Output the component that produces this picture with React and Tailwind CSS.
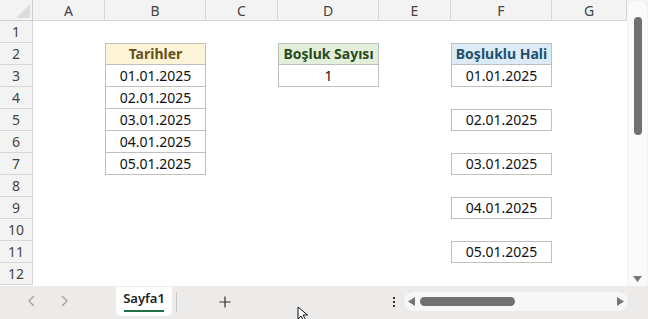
const cols = ["A", "B", "C", "D", "E", "F", "G"];
const rows = [1, 2, 3, 4, 5, 6, 7, 8, 9, 10, 11, 12];

// cell content keyed by "col+row"
const cells = {
  B2: { text: "Tarihler", head: "bg-[#fdf4d8] text-[#65501a]", top: true },
  B3: { text: "01.01.2025" },
  B4: { text: "02.01.2025" },
  B5: { text: "03.01.2025" },
  B6: { text: "04.01.2025" },
  B7: { text: "05.01.2025" },
  D2: { text: "Boşluk Sayısı", head: "bg-[#e3efdb] text-[#2b4a1d]", top: true },
  D3: { text: "1" },
  F2: { text: "Boşluklu Hali", head: "bg-[#ddebf7] text-[#22506c]", top: true },
  F3: { text: "01.01.2025" },
  F5: { text: "02.01.2025", top: true },
  F7: { text: "03.01.2025", top: true },
  F9: { text: "04.01.2025", top: true },
  F11: { text: "05.01.2025", top: true },
};

const Cell = ({ c }) => {
  if (!c) return <div className="bg-white" />;
  return (
    <div
      className={`flex items-center justify-center border-x border-b border-[#bfbfbf] text-[14px] leading-none ${
        c.top ? "border-t" : ""
      } ${c.head ? c.head + " font-bold" : "bg-white text-[#111]"}`}
    >
      {c.text}
    </div>
  );
};

const Sheet = () => (
  <div className="grid flex-1 grid-cols-[33px_72px_101px_72px_101px_72px_101px_1fr] grid-rows-[21px_repeat(12,22px)] bg-white">
    <div className="relative border-r border-b border-[#cdcdcd] bg-[#f3f3f3]">
      <svg className="absolute right-[2px] bottom-[2px]" width="14" height="14">
        <polygon points="14,0 14,14 0,14" fill="#dcdcdc" />
      </svg>
    </div>
    {cols.map((l) => (
      <div
        key={l}
        className="flex items-center justify-center border-r border-b border-[#d6d6d6] bg-[#f3f3f3] text-[14px] text-[#444]"
      >
        {l}
      </div>
    ))}
    {rows.map((r) => (
      <div key={r} className="contents">
        <div className="flex items-center justify-center border-r border-b border-[#d6d6d6] bg-[#f3f3f3] text-[14px] text-[#444]">
          {r}
        </div>
        {cols.map((l) => (
          <Cell key={l} c={cells[l + r]} />
        ))}
      </div>
    ))}
  </div>
);

const VScroll = () => (
  <div className="flex w-[21px] flex-col items-center bg-[#f3f3f3] pt-[1px]">
    <div className="flex h-full w-[19px] flex-col items-center rounded-t-[8px] bg-[#fafafa] pt-[16px] pb-[3px]">
      <div className="h-[118px] w-[8px] rounded-full bg-[#707070]" />
      <div className="flex-1" />
      <svg width="9" height="7" viewBox="0 0 9 7">
        <polygon points="0,0 9,0 4.5,6" fill="#777" />
      </svg>
    </div>
  </div>
);

const BottomBar = () => (
  <div className="relative flex h-[33px] items-start bg-[#edebe9] text-[#222]">
    <div className="flex h-full w-[116px] items-center gap-[22px] pl-[27px] pb-[3px]">
      <svg width="10" height="12" viewBox="0 0 10 12">
        <polyline points="7,1 2,6 7,11" fill="none" stroke="#a0a0a0" strokeWidth="1.3" />
      </svg>
      <svg width="10" height="12" viewBox="0 0 10 12">
        <polyline points="3,1 8,6 3,11" fill="none" stroke="#a0a0a0" strokeWidth="1.3" />
      </svg>
    </div>
    <div className="mt-[1px] flex h-[29px] w-[56px] flex-col items-center justify-center rounded-b-[5px] bg-white">
      <span className="text-[13px] leading-none font-semibold">Sayfa1</span>
      <div className="mt-[5px] h-[2px] w-[40px] bg-[#1e7145]" />
    </div>
    <div className="mt-[6px] ml-[4px] h-[20px] w-px bg-[#c8c8c8]" />
    <div className="flex h-full w-[95px] items-center justify-center pb-[2px]">
      <svg width="12" height="12" viewBox="0 0 12 12">
        <path d="M6 0.5v11M0.5 6h11" stroke="#333" strokeWidth="1.2" />
      </svg>
    </div>
    <div className="flex-1" />
    <div className="flex h-full w-[20px] flex-col items-center justify-center gap-[2px] pb-[2px]">
      <div className="h-[2px] w-[2px] bg-[#333]" />
      <div className="h-[2px] w-[2px] bg-[#333]" />
      <div className="h-[2px] w-[2px] bg-[#333]" />
    </div>
    <div className="mt-[6px] mr-[20px] flex h-[19px] w-[224px] items-center rounded-full bg-[#f7f7f7] px-[4px]">
      <svg width="7" height="9" viewBox="0 0 7 9">
        <polygon points="7,0 7,9 0,4.5" fill="#777" />
      </svg>
      <div className="ml-[5px] h-[9px] w-[95px] rounded-full bg-[#707070]" />
      <div className="flex-1" />
      <svg width="7" height="9" viewBox="0 0 7 9">
        <polygon points="0,0 0,9 7,4.5" fill="#777" />
      </svg>
    </div>
    <svg className="absolute top-[20px] left-[297px]" width="14" height="14" viewBox="0 0 14 14">
      <path d="M1 1v12l3-3 2.5 4.5 2-1L6 9h4.5z" fill="#fff" stroke="#111" strokeWidth="1" />
    </svg>
  </div>
);

export default function App() {
  return (
    <div
      className="flex h-[319px] w-[648px] flex-col overflow-hidden bg-white"
      style={{ fontFamily: '"Noto Sans", "Liberation Sans", sans-serif' }}
    >
      <div className="flex h-[286px]">
        <Sheet />
        <VScroll />
      </div>
      <BottomBar />
    </div>
  );
}
